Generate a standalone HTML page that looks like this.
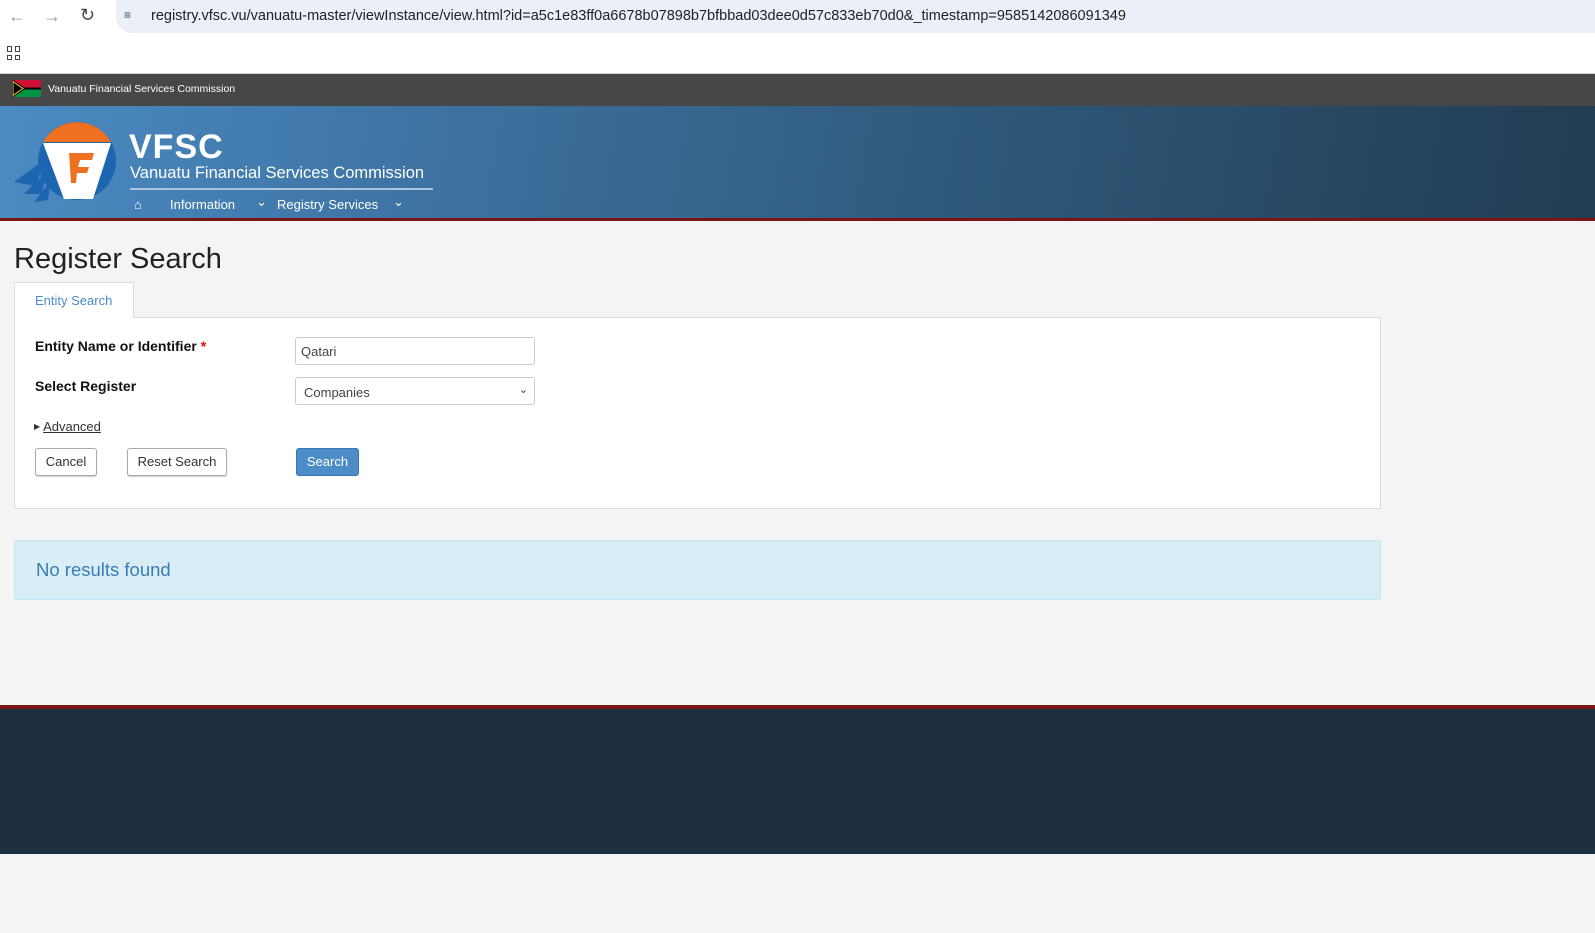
<!DOCTYPE html>
<html><head><meta charset="utf-8"><style>
*{box-sizing:border-box;margin:0;padding:0}
body{width:1595px;height:933px;overflow:hidden;background:#f4f4f4;font-family:"Liberation Sans",sans-serif;position:relative}
.a{position:absolute}
</style></head><body>
<div class="a" style="left:0;top:0;width:1595px;height:74px;background:#fff;border-bottom:1px solid #d0d0d0"></div>
<div class="a" style="left:116px;top:0;width:1479px;height:33px;background:#eaeff8;border-radius:0 0 0 16px"></div>
<div class="a" style="left:8px;top:6px;font-size:18px;color:#999">&#8592;</div>
<div class="a" style="left:43px;top:6px;font-size:18px;color:#999">&#8594;</div>
<div class="a" style="left:80px;top:5px;font-size:18px;color:#444">&#8635;</div>
<div class="a" style="left:124px;top:8px;font-size:12px;color:#444">&#8801;</div>
<div class="a" style="left:151px;top:8px;font-size:14.5px;color:#222">registry.vfsc.vu/vanuatu-master/viewInstance/view.html?id=a5c1e83ff0a6678b07898b7bfbbad03dee0d57c833eb70d0&amp;_timestamp=9585142086091349</div>
<div class="a" style="left:7px;top:46px;width:14px;height:14px;display:grid;grid-template-columns:5px 5px;gap:3px"><i style="border:1.5px solid #444"></i><i style="border:1.5px solid #444"></i><i style="border:1.5px solid #444"></i><i style="border:1.5px solid #444"></i></div>
<div class="a" style="left:0;top:74px;width:1595px;height:32px;background:#474747"></div>
<svg class="a" style="left:13px;top:80px" width="28" height="17"><rect width="28" height="8.5" fill="#d21034"/><rect y="8.5" width="28" height="8.5" fill="#009543"/><rect y="7.5" width="28" height="2" fill="#000"/><polygon points="0,0 13,8.5 0,17" fill="#000"/><polygon points="0,1.5 10,8.5 0,15.5" fill="none" stroke="#fdce12" stroke-width="1"/></svg>
<div class="a" style="left:48px;top:83px;font-size:10.5px;color:#fff">Vanuatu Financial Services Commission</div>
<div class="a" style="left:0;top:106px;width:1595px;height:112px;background:linear-gradient(100deg,#4b8bc3 0%,#3a6c98 35%,#2d5575 65%,#223c52 100%)"></div>
<div class="a" style="left:0;top:218px;width:1595px;height:3px;background:#7a1515"></div>
<svg class="a" style="left:14px;top:120px" width="105" height="84">
<circle cx="63" cy="41" r="39" fill="#1d65b0"/>
<path d="M29,22 A39,39 0 0 1 97,22 Z" fill="#f07022"/>
<polygon points="0,62 30,40 22,66" fill="#1d65b0"/>
<polygon points="10,74 32,52 28,74" fill="#1d65b0"/>
<polygon points="20,82 36,62 34,80" fill="#1d65b0"/>
<polygon points="29,23 97,23 79,79 50,79" fill="#fff"/>
<polygon points="55,33 80,33 78,40 66,40 64,47 75,47 73,53 63,53 62,63 57,63" fill="#f07022"/>
</svg>
<div class="a" style="left:129px;top:128px;font-size:34px;font-weight:bold;color:#fff;letter-spacing:1px">VFSC</div>
<div class="a" style="left:130px;top:164px;font-size:16.5px;color:#fff">Vanuatu Financial Services Commission</div>
<div class="a" style="left:130px;top:188px;width:303px;height:2px;background:#a9c4de"></div>
<div class="a" style="left:134px;top:197px;font-size:13px;color:#fff">&#8962;</div>
<div class="a" style="left:170px;top:197px;font-size:13px;color:#fff">Information</div>
<div class="a" style="left:256px;top:194px;font-size:13px;color:#fff">&#8964;</div>
<div class="a" style="left:277px;top:197px;font-size:13px;color:#fff">Registry Services</div>
<div class="a" style="left:393px;top:194px;font-size:13px;color:#fff">&#8964;</div>
<div class="a" style="left:14px;top:243px;font-size:29px;color:#222">Register Search</div>
<div class="a" style="left:14px;top:317px;width:1367px;height:192px;background:#fff;border:1px solid #ddd"></div>
<div class="a" style="left:14px;top:282px;width:120px;height:36px;background:#fff;border:1px solid #ddd;border-bottom:none"></div>
<div class="a" style="left:35px;top:293px;font-size:13px;color:#4a8cca">Entity Search</div>
<div class="a" style="left:35px;top:338px;font-size:14px;font-weight:bold;color:#111">Entity Name or Identifier <span style="color:#e00">*</span></div>
<div class="a" style="left:35px;top:378px;font-size:14px;font-weight:bold;color:#111">Select Register</div>
<div class="a" style="left:295px;top:337px;width:240px;height:28px;border:1px solid #ccc;border-radius:3px;background:#fff;font-size:13px;color:#444;padding:6px 5px">Qatari</div>
<div class="a" style="left:295px;top:377px;width:240px;height:28px;border:1px solid #ccc;border-radius:3px;background:#fff;font-size:13px;color:#444;padding:7px 8px">Companies<span style="position:absolute;right:6px;top:5px;font-size:11px">&#8964;</span></div>
<div class="a" style="left:34px;top:419px;font-size:13px;color:#333"><span style="font-size:8px;vertical-align:2px">&#9654;</span> <u>Advanced</u></div>
<div class="a" style="left:35px;top:448px;width:62px;height:28px;border:1px solid #aaa;border-radius:3px;background:#fff;font-size:13px;color:#333;text-align:center;line-height:26px;box-shadow:0 1px 1px #ccc">Cancel</div>
<div class="a" style="left:127px;top:448px;width:100px;height:28px;border:1px solid #aaa;border-radius:3px;background:#fff;font-size:13px;color:#333;text-align:center;line-height:26px;box-shadow:0 1px 1px #ccc">Reset Search</div>
<div class="a" style="left:296px;top:448px;width:63px;height:28px;border:1px solid #3a76ad;border-radius:3px;background:#4c8dc7;font-size:13px;color:#fff;text-align:center;line-height:26px">Search</div>
<div class="a" style="left:14px;top:540px;width:1367px;height:60px;background:#d9edf7;border:1px solid #bce8f1;border-radius:3px;font-size:18.5px;color:#3a7db0;padding:18px 21px">No results found</div>
<div class="a" style="left:0;top:705px;width:1595px;height:4px;background:#7a1515"></div>
<div class="a" style="left:0;top:709px;width:1595px;height:145px;background:#1e3040"></div>
</body></html>
